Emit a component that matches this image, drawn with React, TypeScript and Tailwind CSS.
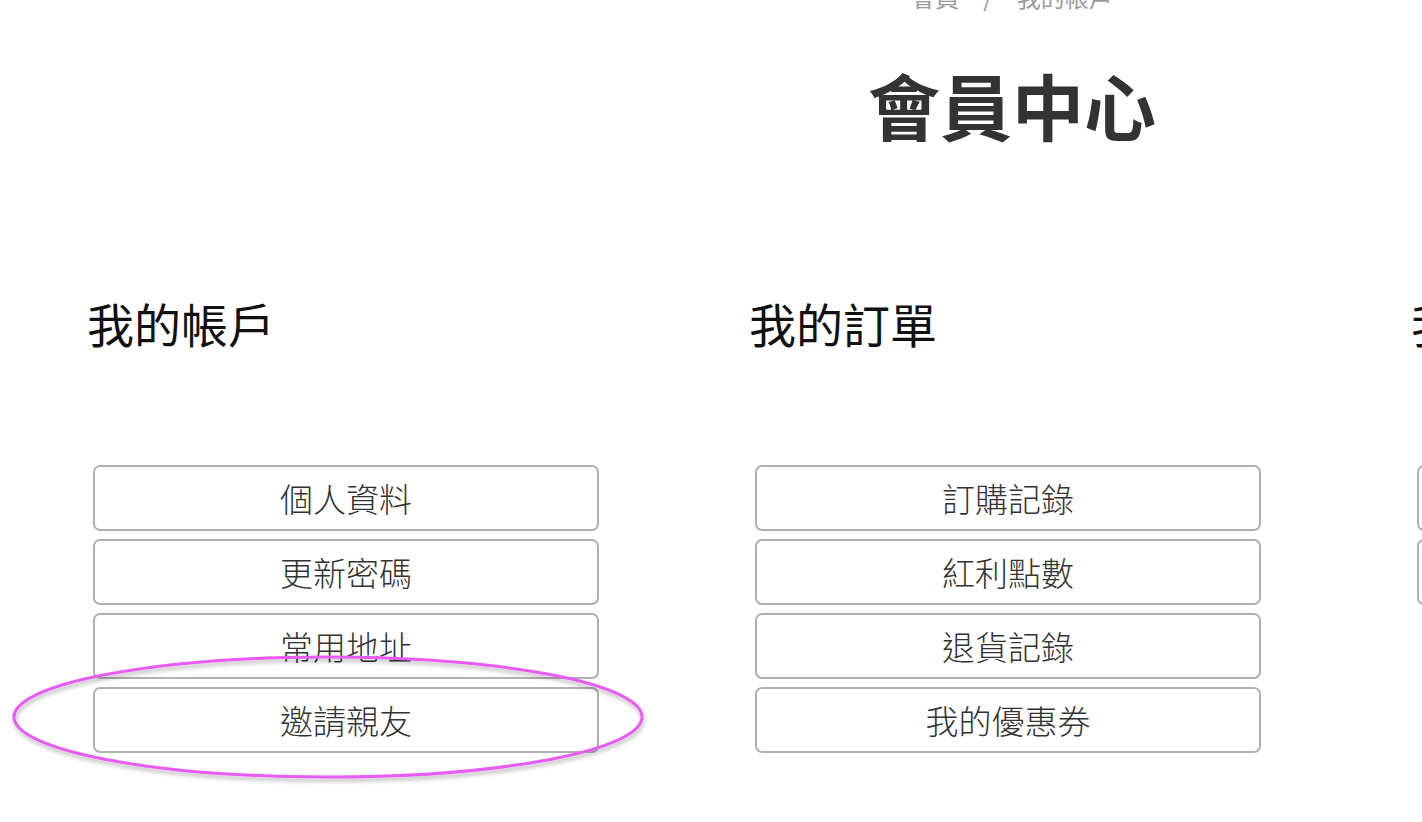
import React from "react";

const FONT = "font-['Noto_Sans_CJK_TC','Noto_Sans_CJK_SC',sans-serif]";

const SECTIONS = [
  { title: "我的帳戶", items: ["個人資料", "更新密碼", "常用地址", "邀請親友"] },
  { title: "我的訂單", items: ["訂購記錄", "紅利點數", "退貨記錄", "我的優惠券"] },
  { title: "我的收藏", items: ["追蹤清單", "瀏覽記錄"] },
];

function MenuButton({ label }: { label: string }) {
  return (
    <button className="flex h-[66px] w-full items-center justify-center rounded-[7px] border-2 border-[#b0b0b0] bg-white text-[33px] font-light leading-none text-[#333333]">
      {label}
    </button>
  );
}

export default function App() {
  return (
    <div className={`relative h-[822px] w-[1422px] overflow-hidden bg-white ${FONT}`}>
      <div className="ml-[93px] w-[1830px]">
        {/* breadcrumb, mostly scrolled out of view */}
        <nav className="-mt-[15px] flex justify-center gap-[24px] pl-[8px] text-[24px] leading-none text-[#9a9a9a]">
          <span>會員</span>
          <span>/</span>
          <span>我的帳戶</span>
        </nav>

        <h1 className="mt-[59px] text-center text-[72px] font-bold leading-none text-[#333333] pl-[8px]">
          會員中心
        </h1>

        <div className="mt-[159px] grid grid-cols-3 gap-x-[156px]">
          {SECTIONS.map((s) => (
            <section key={s.title}>
              <h2 className="-ml-[6px] text-[47px] font-normal leading-none text-[#111111]">{s.title}</h2>
              <div className="mt-[119px] flex flex-col gap-[8px]">
                {s.items.map((it) => (
                  <MenuButton key={it} label={it} />
                ))}
              </div>
            </section>
          ))}
        </div>
      </div>

      {/* annotation ring drawn over the page */}
      <svg className="pointer-events-none absolute left-0 top-0" width="1422" height="822" viewBox="0 0 1422 822">
        <defs>
          <filter id="ringShadow" x="-10%" y="-30%" width="120%" height="160%">
            <feDropShadow dx="1" dy="3" stdDeviation="2" floodColor="#000" floodOpacity="0.3" />
          </filter>
        </defs>
        <ellipse cx="328" cy="717" rx="314" ry="60" fill="none" stroke="#e75cf2" strokeWidth="3" filter="url(#ringShadow)" />
      </svg>
    </div>
  );
}
